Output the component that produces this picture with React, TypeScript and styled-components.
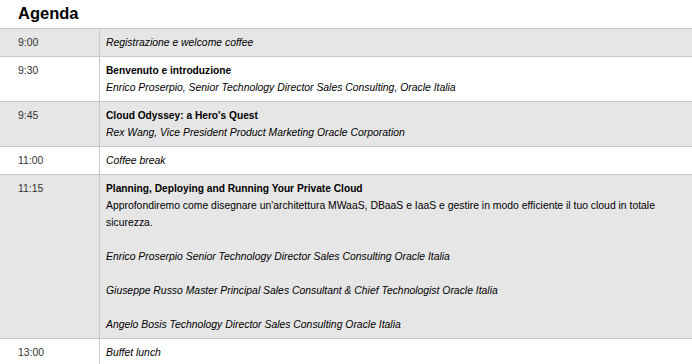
import React from "react";
import styled, { createGlobalStyle } from "styled-components";

const GlobalStyle = createGlobalStyle`
body {
  margin: 0;
  background: #fff;
  font-family: "Liberation Sans", Arial, sans-serif;
}
`;

type Item = {
    time: string;
    title?: string;
    lines: { text: string; italic?: boolean }[];
    shaded: boolean;
};

const agenda: Item[] = [
    { time: "9:00", lines: [{ text: "Registrazione e welcome coffee", italic: true }], shaded: true },
    {
        time: "9:30",
        title: "Benvenuto e introduzione",
        lines: [{ text: "Enrico Proserpio, Senior Technology Director Sales Consulting, Oracle Italia", italic: true }],
        shaded: false,
    },
    {
        time: "9:45",
        title: "Cloud Odyssey: a Hero's Quest",
        lines: [{ text: "Rex Wang, Vice President Product Marketing Oracle Corporation", italic: true }],
        shaded: true,
    },
    { time: "11:00", lines: [{ text: "Coffee break", italic: true }], shaded: false },
    {
        time: "11:15",
        title: "Planning, Deploying and Running Your Private Cloud",
        lines: [
            { text: "Approfondiremo come disegnare un'architettura MWaaS, DBaaS e IaaS e gestire in modo efficiente il tuo cloud in totale" },
            { text: "sicurezza." },
            { text: "" },
            { text: "Enrico Proserpio Senior Technology Director Sales Consulting Oracle Italia", italic: true },
            { text: "" },
            { text: "Giuseppe Russo Master Principal Sales Consultant & Chief Technologist Oracle Italia", italic: true },
            { text: "" },
            { text: "Angelo Bosis Technology Director Sales Consulting Oracle Italia", italic: true },
        ],
        shaded: true,
    },
    { time: "13:00", lines: [{ text: "Buffet lunch", italic: true }], shaded: false },
];

const App = () => {
    return (
        <Page>
            <GlobalStyle />
            <Heading>Agenda</Heading>
            <Table>
                {agenda.map((item) => (
                    <Row key={item.time} shaded={item.shaded}>
                        <TimeCell>{item.time}</TimeCell>
                        <ContentCell>
                            {item.title && <Title>{item.title}</Title>}
                            {item.lines.map((l, i) => (
                                <Line key={i} italic={!!l.italic}>
                                    {l.text || "\u00a0"}
                                </Line>
                            ))}
                        </ContentCell>
                    </Row>
                ))}
            </Table>
        </Page>
    );
};

const Page = styled.div`
width: 692px;
height: 364px;
overflow: hidden;
`;

const Heading = styled.h1`
margin: 0;
height: 28px;
line-height: 27px;
padding-left: 18px;
font-size: 16.5px;
font-weight: bold;
color: #000;
`;

const Table = styled.div`
display: flex;
flex-direction: column;
`;

const Row = styled.div.withConfig({ shouldForwardProp: (p) => p !== "shaded" })<{ shaded: boolean }>`
display: grid;
grid-template-columns: 100px 1fr;
border-top: 1px solid #c8c8c8;
background: ${(p) => (p.shaded ? "#e6e6e6" : "#ffffff")};
`;

const TimeCell = styled.div`
padding: 5px 0 5px 18px;
border-right: 1px solid #c8c8c8;
font-size: 10.4px;
line-height: 17px;
color: #333;
`;

const ContentCell = styled.div`
padding: 5px 6px 5px 6px;
font-size: 10.4px;
line-height: 17px;
color: #000;
`;

const Title = styled.div`
font-weight: bold;
font-size: 10.2px;
white-space: nowrap;
`;

const Line = styled.div.withConfig({ shouldForwardProp: (p) => p !== "italic" })<{ italic: boolean }>`
font-style: ${(p) => (p.italic ? "italic" : "normal")};
white-space: nowrap;
`;

export default App;
